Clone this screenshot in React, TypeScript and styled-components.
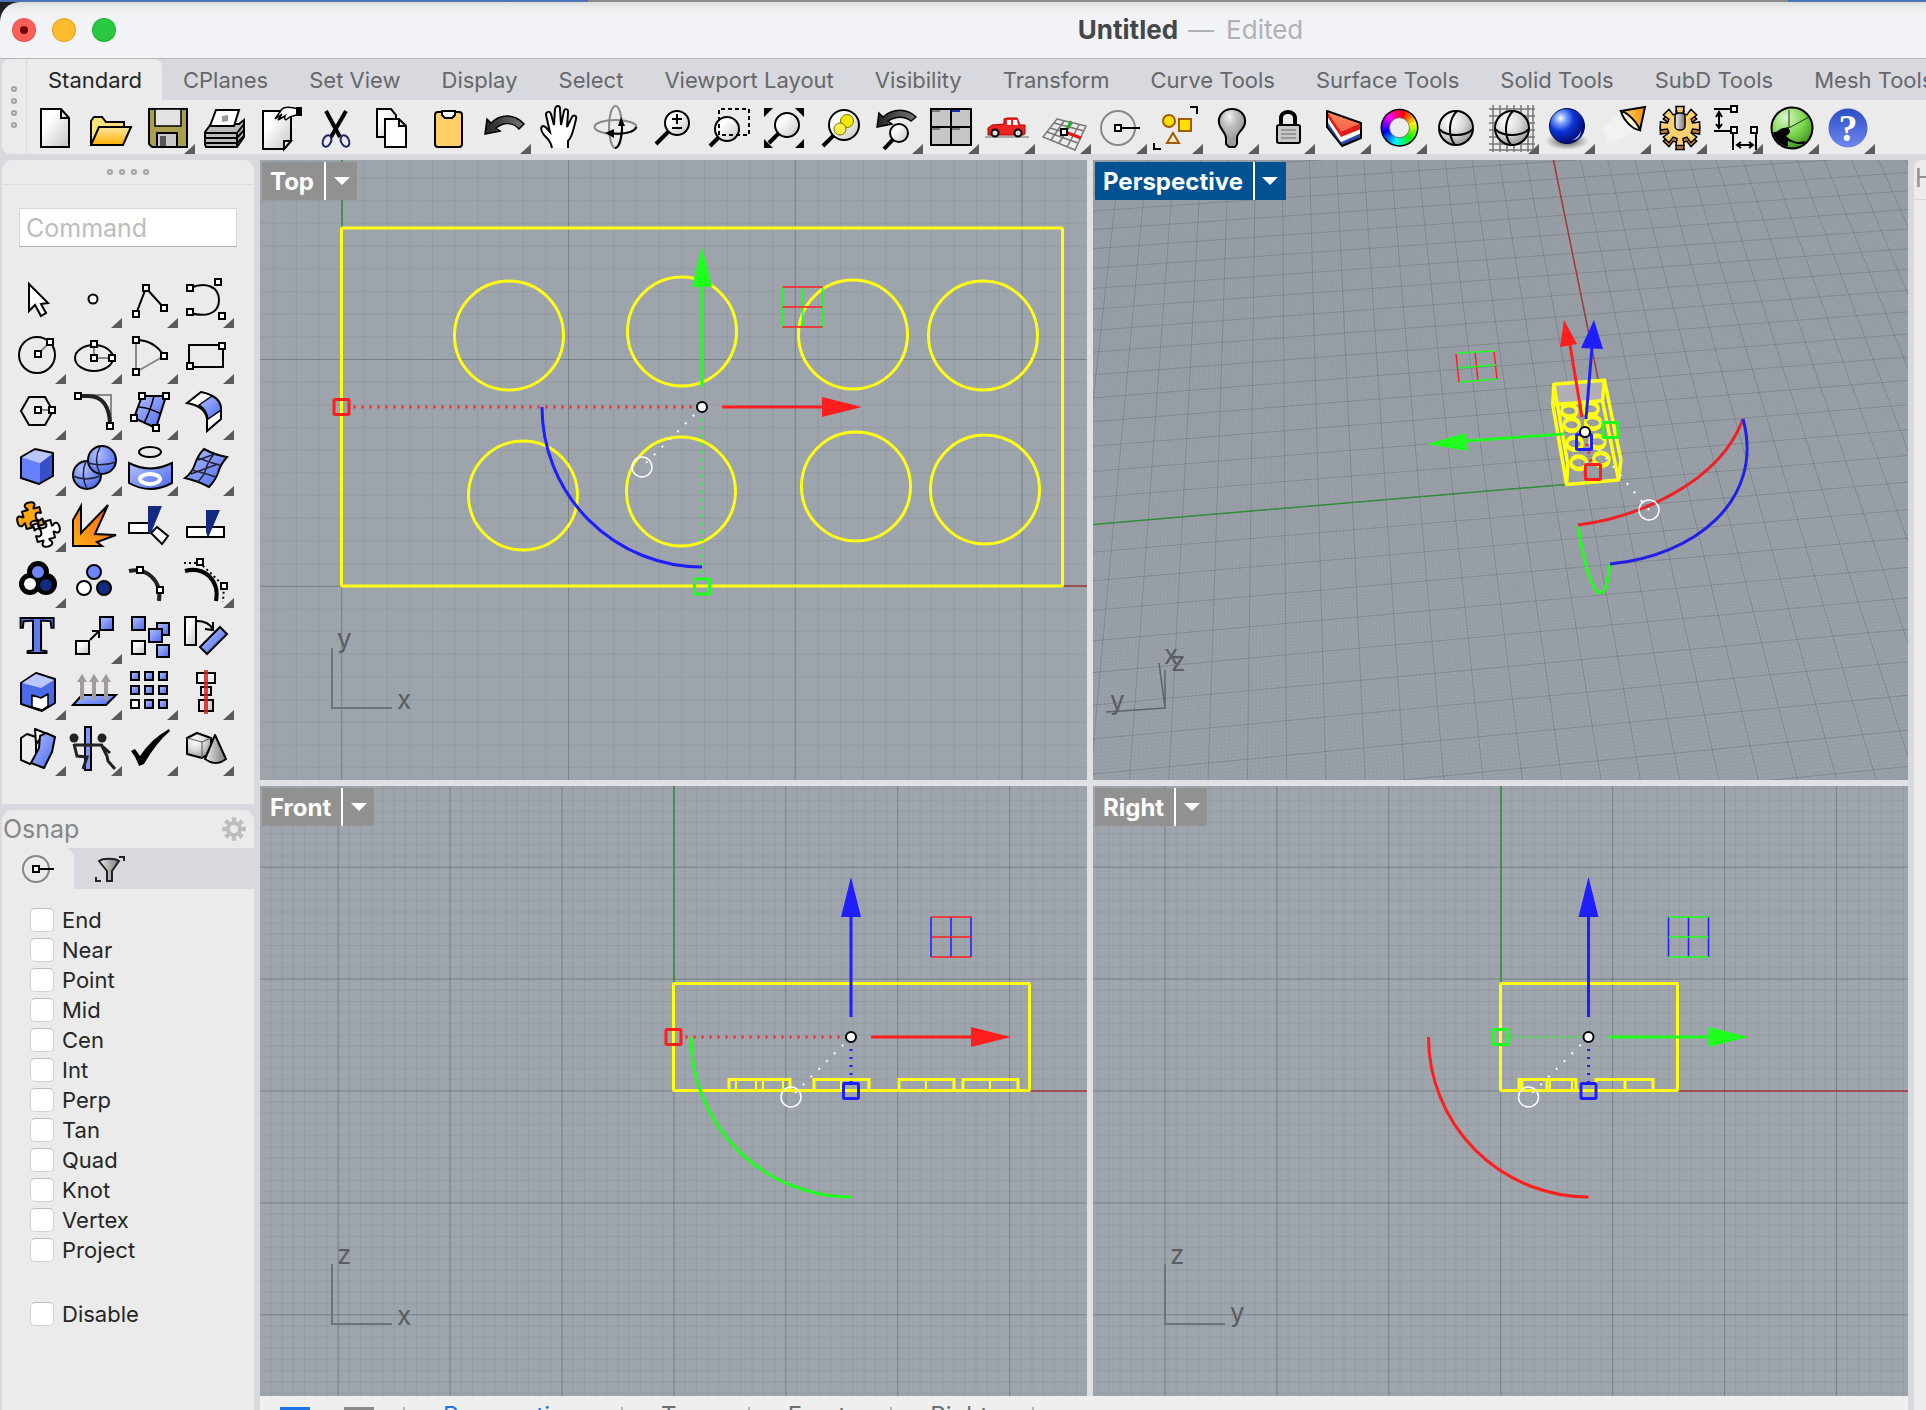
import React from "react";
import styled, { createGlobalStyle } from "styled-components";

const FONT = `Inter, "Liberation Sans", sans-serif`;
const YELLOW = "#ffff14";
const RED = "#ff1e1e";
const GREEN = "#1eff1e";
const BLUE = "#1e1eff";
const CHROME = "#d8d9de";
const PANEL = "#ebebeb";

const GlobalStyle = createGlobalStyle`
  * { box-sizing: border-box; }
  body { margin: 0; overflow: hidden; background: ${CHROME}; font-family: ${FONT}; }
  button, input { font: inherit; color: inherit; margin: 0; }
  button { border: 0; padding: 0; background: none; }
`;

/* ---------- window frame ---------- */

const Screen = styled.div`
  height: 100vh;
  overflow: hidden;
`;

const Shell = styled.div`
  display: flex;
  flex-direction: column;
  height: calc(100vh + 30px);
  background: ${CHROME};
`;

const Desktop = styled.div`
  display: grid;
  grid-template-columns: 588fr 1200fr 138fr;
  flex: none;
  height: 2px;
`;

const DesktopStrip = styled.span<{ $tone: string }>`
  background: ${(p) => p.$tone};
`;

const TitleBack = styled.div`
  flex: none;
  background: #1d1f24;
`;

const TitleBar = styled.header`
  display: flex;
  align-items: center;
  height: 57px;
  padding: 0 12px;
  border-top-left-radius: 20px;
  border-bottom: 1px solid #b4b5b9;
  background: linear-gradient(#dededf, #eff0f2 8px, #f2f3f6 16px);
`;

const Lights = styled.div`
  display: flex;
  gap: 16px;
  flex: 1068 1 0;
`;

const Light = styled.button<{ $color: string }>`
  display: grid;
  place-items: center;
  width: 24px;
  height: 24px;
  border-radius: 50%;
  border: 1px solid rgba(0, 0, 0, 0.12);
  background: ${(p) => p.$color};
`;

const LightDot = styled.span`
  width: 8px;
  height: 8px;
  border-radius: 50%;
  background: #720303;
`;

const TitleText = styled.h1`
  display: flex;
  gap: 10px;
  margin: 0;
  font-size: 26px;
  line-height: 32px;
  font-weight: 700;
  color: #45464a;
`;

const TitleState = styled.span`
  display: flex;
  gap: 12px;
  font-weight: 400;
  color: #b0b1b4;
`;

const TitleRest = styled.div`
  flex: 612 1 0;
`;

/* ---------- ribbon ---------- */

const Ribbon = styled.div`
  display: flex;
  flex: none;
  height: 95px;
  padding-left: 2px;
  margin-bottom: 6px;
`;

const RibbonGrip = styled.div`
  display: flex;
  align-items: center;
  justify-content: center;
  width: 25px;
  border-radius: 8px 0 0 8px;
  border-right: 1px solid ${CHROME};
  background: ${PANEL};
`;

const RibbonMain = styled.div`
  flex: 1;
  min-width: 0;
  background: ${PANEL};
`;

const TabStrip = styled.div`
  display: flex;
  height: 41px;
  overflow: hidden;
  background: linear-gradient(to right, ${PANEL} 100px, ${CHROME} 100px);
`;

const Tab = styled.button<{ $active?: boolean }>`
  flex: none;
  padding: 0 20px 0 21px;
  font-size: 22px;
  line-height: 42px;
  white-space: nowrap;
  color: ${(p) => (p.$active ? "#262626" : "#66676b")};
  background: ${(p) => (p.$active ? PANEL : CHROME)};
  border-top-right-radius: ${(p) => (p.$active ? "8px" : "0")};
`;

const ToolRow = styled.div`
  display: flex;
  height: 54px;
`;

const ToolButton = styled.button`
  display: block;
  position: relative;
  flex: none;
  width: 56px;
  height: 100%;
  svg { display: block; }
`;

const Corner = styled.span`
  position: absolute;
  right: 0;
  bottom: 0;
  width: 11px;
  height: 10px;
  background: #5c5c5c;
  clip-path: polygon(100% 0, 100% 100%, 0 100%);
`;

/* ---------- sidebar ---------- */

const Body = styled.div`
  display: flex;
  flex: 1;
  min-height: 0;
`;

const Sidebar = styled.aside`
  display: flex;
  flex-direction: column;
  gap: 6px;
  flex: none;
  width: 260px;
  padding: 0 6px 0 2px;
`;

const Panel = styled.section<{ $grow?: boolean }>`
  flex: ${(p) => (p.$grow ? "1" : "none")};
  border-radius: 10px 10px 0 0;
  background: ${PANEL};
`;

const PanelGrip = styled.div`
  display: grid;
  place-items: center;
  height: 25px;
  border-bottom: 1px solid #dcdcdc;
`;

const CommandField = styled.input`
  display: block;
  width: 218px;
  height: 39px;
  margin: 23px 17px 25px;
  padding: 0 6px;
  border: 1px solid #d6d6d6;
  border-bottom-color: #b0b0b0;
  background: #fff;
  font-size: 25px;
  outline: none;
  &::placeholder { color: #bcbcbc; opacity: 1; }
`;

const Palette = styled.div`
  display: grid;
  grid-template-columns: repeat(4, 56px);
  grid-auto-rows: 56px;
  padding: 0 8px 28px;
`;

const OsnapHeader = styled.div`
  display: flex;
  align-items: center;
  justify-content: space-between;
  height: 38px;
  padding: 0 8px 0 1px;
  color: #868686;
`;

const OsnapTitle = styled.h2`
  margin: 0;
  font-size: 25px;
  line-height: 34px;
  font-weight: 400;
`;

const OsnapTabs = styled.div`
  display: flex;
  height: 41px;
  background: linear-gradient(to right, ${PANEL} 60px, ${CHROME} 60px);
`;

const OsnapTab = styled.button<{ $active?: boolean }>`
  width: 72px;
  height: 41px;
  background: ${(p) => (p.$active ? PANEL : CHROME)};
  border-radius: ${(p) => (p.$active ? "0 10px 0 0" : "0 0 0 10px")};
  svg { display: block; margin: 0 auto; }
`;

const SnapList = styled.div`
  display: flex;
  flex-direction: column;
  padding: 16px 28px;
`;

const SnapItem = styled.label<{ $apart?: boolean }>`
  display: flex;
  align-items: center;
  gap: 8px;
  height: 30px;
  margin-top: ${(p) => (p.$apart ? "34px" : "0")};
  font-size: 22px;
  color: #262626;
`;

const Check = styled.input`
  appearance: none;
  width: 24px;
  height: 24px;
  border: 1px solid #d2d2d2;
  border-top-color: #bcbcbc;
  border-radius: 5px;
  background: #fff;
`;

/* ---------- viewports ---------- */

const Center = styled.main`
  display: flex;
  flex-direction: column;
  flex: 1;
  min-width: 0;
`;

const Viewports = styled.div`
  display: grid;
  grid-template: 620fr 610fr / 827fr 815fr;
  gap: 6px;
  flex: 1;
  min-height: 0;
  background: #e0e1e5;
`;

const ViewportBox = styled.section<{ $tone: string }>`
  position: relative;
  min-width: 0;
  min-height: 0;
  overflow: hidden;
  background: ${(p) => p.$tone};
`;

const Canvas = styled.svg`
  display: block;
  position: absolute;
  inset: 0;
  width: 100%;
  height: 100%;
`;

const ViewLabel = styled.div<{ $active?: boolean }>`
  position: absolute;
  left: 2px;
  top: 2px;
  display: flex;
  height: 38px;
  color: #fff;
  background: ${(p) => (p.$active ? "#005293" : "#919191")};
`;

const ViewName = styled.button`
  padding: 0 10px 0 8px;
  font-size: 24px;
  font-weight: 700;
`;

const ViewMenu = styled.button`
  display: grid;
  place-items: center;
  width: 33px;
  border-left: 2px solid #fff;
`;

const ViewTabs = styled.nav`
  display: flex;
  align-items: flex-start;
  flex: none;
  height: 44px;
  padding: 11px 20px 0;
  background: #efefef;
  font-size: 24px;
  line-height: 18px;
`;

const ViewTabIcon = styled.button<{ $tone: string }>`
  width: 30px;
  height: 24px;
  margin-right: 34px;
  border: 3px solid ${(p) => p.$tone};
  & + & { margin-right: 29px; }
`;

const ViewTab = styled.button<{ $active?: boolean }>`
  padding: 0 44px 0 38px;
  border-left: 2px solid #b5b5b5;
  color: ${(p) => (p.$active ? "#1f74e8" : "#6d6d6d")};
`;

const RightDock = styled.aside`
  flex: none;
  width: 12px;
  margin-left: 6px;
  overflow: hidden;
  border-top-left-radius: 8px;
  background: #ececec;
`;

const DockTitle = styled.div`
  height: 40px;
  padding-left: 1px;
  border-bottom: 1px solid #d9d9d9;
  font-size: 25px;
  line-height: 36px;
  color: #8f8f8f;
`;

/* ---------- shared icon parts ---------- */

const Grips = ({ vertical }: { vertical?: boolean }) => (
  <svg width={vertical ? 8 : 44} height={vertical ? 44 : 8} fill="none" stroke="#a2a2a2" strokeWidth="2">
    {[4, 16, 28, 40].map((n) => (
      <circle key={n} cx={vertical ? 4 : n} cy={vertical ? n : 4} r="2" />
    ))}
  </svg>
);

const Defs = () => (
  <svg width="0" height="0" style={{ position: "absolute" }} aria-hidden="true">
    <defs>
      <linearGradient id="paper" x2="1" y2="1"><stop offset=".3" stopColor="#fff" /><stop offset="1" stopColor="#c4c4c4" /></linearGradient>
      <linearGradient id="folder" x2="0" y2="1"><stop stopColor="#ffe9a0" /><stop offset="1" stopColor="#ffb000" /></linearGradient>
      <linearGradient id="sky" x2="1" y2="1"><stop stopColor="#b4c3ff" /><stop offset="1" stopColor="#4a66ee" /></linearGradient>
      <linearGradient id="fire" x1="0" y1="1" x2="1" y2="0"><stop stopColor="#ffb01c" /><stop offset=".6" stopColor="#ff7a1a" /><stop offset="1" stopColor="#e83c0c" /></linearGradient>
      <radialGradient id="pearl" cx=".35" cy=".3" r=".8"><stop stopColor="#fff" /><stop offset=".5" stopColor="#d8d8d8" /><stop offset="1" stopColor="#8c8c8c" /></radialGradient>
      <radialGradient id="bulb" cx=".4" cy=".2" r=".6"><stop stopColor="#f2f2f2" /><stop offset=".5" stopColor="#bcbcbc" /><stop offset="1" stopColor="#9c9c9c" /></radialGradient>
      <radialGradient id="azure" cx=".35" cy=".3" r=".8"><stop stopColor="#b3c2ff" /><stop offset="1" stopColor="#4463e6" /></radialGradient>
      <radialGradient id="marble" cx=".32" cy=".28" r=".75"><stop stopColor="#fff" /><stop offset=".2" stopColor="#7fa6ff" /><stop offset=".5" stopColor="#0c35d6" /><stop offset="1" stopColor="#000a6e" /></radialGradient>
      <radialGradient id="leaf" cx=".35" cy=".25" r=".9"><stop stopColor="#dcf5cf" /><stop offset=".5" stopColor="#7cd64a" /><stop offset="1" stopColor="#2c7a14" /></radialGradient>
      <linearGradient id="help" x2="0" y2="1"><stop stopColor="#2a4fc6" /><stop offset="1" stopColor="#6f86ee" /></linearGradient>
      <linearGradient id="steel" x2="1" y2="0"><stop stopColor="#eee" /><stop offset="1" stopColor="#777" /></linearGradient>
      <radialGradient id="shade"><stop stopColor="#222" stopOpacity=".9" /><stop offset="1" stopColor="#555" stopOpacity="0" /></radialGradient>
      <linearGradient id="cone" x2="1" y2="0"><stop stopColor="#ffd080" /><stop offset="1" stopColor="#ff9400" /></linearGradient>
      <linearGradient id="swoop" x2="1" y2="0"><stop stopColor="#222" /><stop offset="1" stopColor="#777" /></linearGradient>
      <linearGradient id="coral" x2="0" y2="1"><stop stopColor="#ff8a5c" /><stop offset="1" stopColor="#ff6048" /></linearGradient>
    </defs>
  </svg>
);

const Node = ({ x, y }: { x: number; y: number }) => (
  <rect x={x - 3} y={y - 3} width="6" height="6" fill="#fff" stroke="#000" strokeWidth="2" />
);

const Lens = ({ x, y, r, hx, hy }: { x: number; y: number; r: number; hx: number; hy: number }) => {
  const d = Math.hypot(hx - x, hy - y);
  return (
    <>
      <path d={`M${x + ((hx - x) * r) / d} ${y + ((hy - y) * r) / d}L${hx} ${hy}`} stroke="#000" strokeWidth="4" />
      <circle cx={x} cy={y} r={r} fill="url(#paper)" stroke="#000" strokeWidth="2" />
    </>
  );
};

/* Jigsaw piece: knobs on two sides, bites on the other two. */
const PIECE =
  "M-9 -9H-3C-3 -11 -5 -11 -5 -13C-5 -17 5 -17 5 -13C5 -11 3 -11 3 -9H9V-3C7 -3 8 -4 6 -4C2 -4 2 4 6 4C8 4 7 3 9 3V9H3C3 7 4 8 4 6C4 2 -4 2 -4 6C-4 8 -3 7 -3 9H-9V3C-11 3 -11 5 -13 5C-17 5 -17 -5 -13 -5C-11 -5 -11 -3 -9 -3Z";
const Jigsaw = ({ x, y, turn, fill }: { x: number; y: number; turn: number; fill: string }) => (
  <path d={PIECE} transform={`translate(${x} ${y}) rotate(${turn})`} fill={fill} stroke="#000" strokeWidth="2" strokeLinejoin="round" />
);

function gearPath(cx: number, cy: number, inner: number, outer: number, teeth: number) {
  const step = (Math.PI * 2) / teeth;
  const pts: string[] = [];
  for (let i = 0; i < teeth; i++) {
    const spots: [number, number][] = [[-0.3, inner], [-0.26, outer], [0.26, outer], [0.3, inner]];
    spots.forEach(([k, r]) => {
      const a = (i + k) * step;
      pts.push(`${(cx + Math.sin(a) * r).toFixed(1)} ${(cy - Math.cos(a) * r).toFixed(1)}`);
    });
  }
  return `M${pts.join("L")}Z`;
}

const ColorRing = () => (
  <>
    <circle cx="28.5" cy="27.7" r="19" fill="#000" />
    {Array.from({ length: 36 }, (_, i) => {
      const a = (i * Math.PI) / 18;
      const b = ((i + 1.1) * Math.PI) / 18;
      return (
        <path
          key={i}
          d={`M28.5 27.7L${28.5 + 17.5 * Math.cos(a)} ${27.7 + 17.5 * Math.sin(a)}L${28.5 + 17.5 * Math.cos(b)} ${27.7 + 17.5 * Math.sin(b)}Z`}
          fill={`hsl(${80 + i * 10} 100% 50%)`}
        />
      );
    })}
    <circle cx="28.5" cy="27.7" r="10" fill={PANEL} stroke="#777" strokeWidth="1" />
  </>
);

const Globe = () => (
  <>
    <circle cx="29" cy="28" r="17" fill="url(#pearl)" stroke="#000" strokeWidth="2" />
    <path d="M30 11C21 20 21 36 28 45M12 29C20 37 38 37 46 29" fill="none" stroke="#000" strokeWidth="2" />
  </>
);

type Item = { name: string; more?: boolean; art: React.ReactNode };
const k2 = { stroke: "#000", strokeWidth: 2, fill: "none" } as const;

const toolbar: Item[] = [
  { name: "New", art: <path {...k2} fill="url(#paper)" d="M14 9H34L42 18V47H14ZM34 9V18H42" /> },
  { name: "Open", art: <g {...k2}><path fill="#ffe27a" d="M8 45V21L11 17H19L23 22H41V30" /><path fill="url(#folder)" d="M8 45L16 27H48L40 45Z" /></g> },
  { name: "Save", more: true, art: <g {...k2}><path fill="#aaa04c" d="M10 9H48V47H13L10 44Z" /><path fill="#e2e2e2" strokeWidth="1.5" d="M16 9H42V26H16Z" /><path fill="#c8c8c8" d="M18 33H38V47H18Z" /><path fill="#555" stroke="none" d="M21 36H27V46H21Z" /></g> },
  { name: "Print", art: <g {...k2}><path fill="#bbb" d="M10 32L16 24H44L49 20V37L42 47H11L10 44Z" /><path fill="#fff" d="M21 10H44L39 26H15Z" /><path d="M10 33H42L49 24M10 38H42L49 30M10 43H42L49 36M42 33V47" /><path d="M27 16L33 15V21L27 22Z" stroke="none" fill="#999" /></g> },
  { name: "Page properties", art: <g {...k2}><path fill="url(#paper)" d="M12 11H40V41L33 49H12Z" /><path fill="#fff" d="M33 49V41H40Z" /><path fill="#fff" strokeWidth="1.5" d="M24 19L31 9C34 6 40 7 48 9V14C44 16 40 15 36 19C34 21 33 18 34 16L27 20L31 14Z" /><path fill="#000" d="M46 8H50V15H46Z" /></g> },
  { name: "Cut", art: <g fill="none"><path d="M19 11L33 37M39 11L24 37" stroke="#000" strokeWidth="4" /><ellipse cx="20" cy="41" rx="4" ry="6" transform="rotate(25 20 41)" stroke="#1d2560" strokeWidth="2" /><ellipse cx="38" cy="41" rx="4" ry="6" transform="rotate(-25 38 41)" stroke="#1d2560" strokeWidth="2" /></g> },
  { name: "Copy", art: <g {...k2} fill="url(#paper)"><path d="M14 9H28L33 15V37H14Z" /><path fill="#fff" d="M22 19H36L43 26V47H22ZM36 19V26H43" /></g> },
  { name: "Paste", art: <g {...k2}><rect x="16" y="12" width="27" height="35" rx="3" fill="#ffd066" /><path fill="#fff" d="M23 11H36V15L33 18H26L23 15Z" /></g> },
  { name: "Undo", more: true, art: <path d="M10 34L12 19L16 23C26 13 40 14 49 24L44 29C38 22 29 22 21 28L25 31Z" fill="url(#swoop)" stroke="#000" strokeWidth="1.5" /> },
  { name: "Pan", art: <path {...k2} fill="#fff" d="M21 48C20 42 17 39 13 35C10 31 9 27 12 26C15 26 16 29 19 32L15 15C15 11 19 11 20 14L23 25L24 9C25 5 29 5 29 9L30 25L33 11C34 8 38 9 37 13L36 27L41 17C43 14 46 16 45 19C43 28 41 38 37 41V48" /> },
  { name: "Rotate view", art: <g fill="none" strokeWidth="2"><ellipse cx="28.500" cy="27" rx="6.500" ry="21" stroke="#888" /><ellipse cx="28.500" cy="27" rx="21" ry="7" stroke="#888" /><path d="M35 24V30C34 42 31 48 28 48M49 27C48 32 36 35 24 33" stroke="#000" /><path d="M31 26L34 17L38 26ZM27 29L18 33L27 38Z" fill="#000" /></g> },
  { name: "Zoom dynamic", art: <g><Lens x={34} y={23} r={12} hx={13} hy={44} /><path {...k2} d="M34 14V24M29 19H39M29 28H39" /></g> },
  { name: "Zoom window", art: <g><Lens x={28} y={29} r={12} hx={11} hy={46} /><path {...k2} strokeDasharray="4 3" d="M20 35V9H50V35Z" /></g> },
  { name: "Zoom extents", art: <g><Lens x={32} y={25} r={12} hx={14} hy={43} /><path d="M9 8H18L9 17ZM49 8V17L40 8ZM49 48H40L49 39ZM9 48V39L18 48Z" /></g> },
  { name: "Zoom selected", art: <g><Lens x={33} y={25} r={15} hx={12} hy={46} /><g fill="#f5e800" stroke="#7a7400"><circle cx="36" cy="21" r="6.500" /><circle cx="29" cy="29" r="6" fill="#fff14a" /></g></g> },
  { name: "Undo view change", more: true, art: <g><path d="M10 27L12 13L16 17C26 8 40 8 49 17L44 21C38 16 29 16 21 21L25 24Z" fill="url(#swoop)" stroke="#000" strokeWidth="1.5" /><Lens x={32} y={33} r={9} hx={17} hy={49} /></g> },
  { name: "Four viewports", more: true, art: <g><path {...k2} fill="#c6c6c6" d="M8 9H48V45H8ZM28 9V45M8 27H48" /><path d="M9 10H17V12H9ZM9 28H17V30H9ZM29 28H37V30H29Z" fill="#777" /><path d="M29 10H37V12H29Z" fill="#0a2fb8" /></g> },
  { name: "Named views", more: true, art: <g><path d="M6 37H50" stroke="#aaa" strokeWidth="2" /><path d="M9 35V28L13 25L25 24V19L28 18H38L41 25H46V34L44 35Z" fill="#ee2222" stroke="#a00" /><path d="M28 20H32V25H28ZM34 20H38L39 25H34Z" fill="#fff" /><g fill="#ddd" stroke="#000" strokeWidth="2"><circle cx="16" cy="33" r="3.500" /><circle cx="39" cy="33" r="3.500" /></g></g> },
  { name: "Construction planes", more: true, art: <g fill="none"><path stroke="#777" strokeWidth="1.500" d="M22 19L51 26L40 50L8 37ZM19 23L49 31M15 28L46 37M12 32L43 43M29 21L16 40M37 23L24 43M44 25L32 47" /><path d="M30 32L36 21" stroke="#16b816" strokeWidth="2.500" /><path d="M30 32L46 38" stroke="#e01818" strokeWidth="3" /><Node x={29} y={32} /></g> },
  { name: "Object snap", more: true, art: <g><circle cx="27" cy="28" r="17" fill="none" stroke="#888" strokeWidth="2" /><path {...k2} d="M27 28H49" /><Node x={27} y={28} /></g> },
  { name: "Selection filter", more: true, art: <g strokeWidth="2"><path {...k2} d="M43 7H50V14M7 43V49H14" /><g stroke="#a35a00"><circle cx="22" cy="21" r="6" fill="#ffe000" /><path d="M32 19H44V31H32Z" fill="#ffe000" /><path d="M26 33L32 43H20Z" fill="#ffe8c8" /></g></g> },
  { name: "Hide objects", more: true, art: <path {...k2} fill="url(#bulb)" d="M29 9C20 9 15 16 16 23C17 30 23 32 23 38V44L26 47H32L34 44V38C34 32 41 30 42 23C43 15 37 9 29 9Z" /> },
  { name: "Lock objects", more: true, art: <g><path d="M22 25V18C22 10 36 10 36 18V25" fill="none" stroke="#000" strokeWidth="4" /><rect x="18" y="25" width="23" height="18" rx="2" fill="#c8c8c8" stroke="#000" strokeWidth="2" /><path d="M22 30H37M22 34H37M22 38H37" stroke="#888" strokeWidth="1.500" /></g> },
  { name: "Layers", more: true, art: <g strokeLinejoin="round"><path fill="#2b4ab4" d="M12 21L26 42L46 33V38L27 46L12 27Z" /><path fill="#fff" d="M12 16L26 37L46 29V33L26 42L12 21Z" /><path fill="#e21c1c" d="M12 11L26 31L46 23V29L26 37L12 16Z" /><path fill="url(#coral)" d="M12 11L46 23L26 32Z" /><path {...k2} d="M12 11L46 23V38L27 46L12 27Z" /></g> },
  { name: "Object properties", more: true, art: <ColorRing /> },
  { name: "Shaded viewport", art: <Globe /> },
  { name: "Grid", more: true, art: <g><path stroke="#777" strokeWidth="1.500" d="M6 9H52M6 16H52M6 23H52M6 30H52M6 37H52M6 44H52M6 50H52M10 5V52M17 5V52M24 5V52M31 5V52M38 5V52M45 5V52M50 5V52" /><Globe /></g> },
  { name: "Render", more: true, art: <g><ellipse cx="28" cy="41" rx="22" ry="9" fill="url(#shade)" /><circle cx="28" cy="26" r="17.500" fill="url(#marble)" stroke="#000a50" /><path d="M33 40C38 38 41 34 42 30C42 37 38 40 33 40Z" fill="#9dbcff" /></g> },
  { name: "Lights", more: true, art: <g {...k2}><path d="M26 11L45 30L14 44L8 28Z" stroke="none" fill="#fff" opacity=".35" /><path fill="url(#cone)" d="M26 11L50 7L45 30Z" /><path fill="#fff3d8" d="M26 11C32 12 42 22 45 30C38 30 28 20 26 11Z" /></g> },
  { name: "Options", more: true, art: <g {...k2}><path fill="#c98420" strokeWidth="1.500" d={gearPath(29, 30, 13, 20, 8)} /><path fill="#ffd070" strokeWidth="1.500" d={gearPath(29, 26, 13, 20, 8)} /><rect x="24" y="13" width="10" height="17" rx="4" fill="url(#steel)" strokeWidth="1.500" /></g> },
  { name: "Dimension", more: true, art: <g {...k2}><path d="M7 9H24M7 31H24M12 14V27M9 17L12 12L15 17M9 24L12 28L15 24M26 33V50M49 33V50M31 45H45M34 42L30 45L34 48M42 42L46 45L42 48" /><Node x={27} y={9} /><Node x={27} y={30} /><Node x={47} y={30} /></g> },
  { name: "Grasshopper", more: true, art: <g><circle cx="29" cy="28" r="20.500" fill="url(#leaf)" stroke="#000" strokeWidth="2" /><path d="M10 32C15 33 16 28 21 28L25 27L27 31C27 33 25 35 23 36C27 40 32 42 36 42L42 41L41 44L34 44L25 41L25 47C17 45 11 39 10 32Z" /><path d="M24 29L46 17M26 28V10" stroke="#123a08" /></g> },
  { name: "Help", more: true, art: <g><circle cx="29" cy="28" r="19.500" fill="url(#help)" /><text x="29" y="41" textAnchor="middle" fontFamily="Liberation Serif, serif" fontWeight="700" fontSize="38" fill="#fff">?</text></g> },
];

const Box = ({ x, y, s = 13, fill = "url(#sky)" }: { x: number; y: number; s?: number; fill?: string }) => (
  <rect x={x} y={y} width={s} height={s} fill={fill} stroke="#000" strokeWidth="2" />
);

const palette: Item[] = [
  { name: "Select", art: <path {...k2} fill="#fff" d="M19 12V39L25 33L31 44L36 41L31 32L38 31Z" /> },
  { name: "Point", more: true, art: <circle cx="27" cy="27" r="4.500" fill="#fff" stroke="#000" strokeWidth="2" /> },
  { name: "Polyline", more: true, art: <g {...k2}><path d="M14 42L24 16L42 36" /><Node x={24} y={16} /><Node x={14} y={42} /><Node x={42} y={36} /></g> },
  { name: "Curve", more: true, art: <g {...k2}><path d="M12 16C28 9 41 15 41 28C41 43 26 45 12 41" /><Node x={12} y={16} /><Node x={40} y={10} /><Node x={12} y={40} /><Node x={44} y={44} /></g> },
  { name: "Circle", more: true, art: <g {...k2}><circle cx="27" cy="27" r="18" /><path d="M28 26L40 14" stroke="#888" /><Node x={28} y={26} /><Node x={40} y={14} /></g> },
  { name: "Ellipse", more: true, art: <g {...k2}><ellipse cx="28" cy="30" rx="19" ry="13" /><path d="M28 16V30H46" stroke="#888" /><Node x={28} y={16} /><Node x={28} y={30} /><Node x={46} y={30} /></g> },
  { name: "Arc", more: true, art: <g {...k2}><path d="M14 12V44L42 28" stroke="#888" /><path d="M14 12C27 12 36 18 42 28" /><Node x={14} y={12} /><Node x={42} y={28} /><Node x={14} y={44} /></g> },
  { name: "Rectangle", more: true, art: <g {...k2}><path d="M11 17H45V39H11Z" /><Node x={44} y={18} /><Node x={12} y={38} /></g> },
  { name: "Polygon", more: true, art: <g {...k2}><path d="M11 27L19 13H35L43 27L35 41H19Z" /><path d="M28 26H42" stroke="#888" /><Node x={28} y={26} /><Node x={42} y={26} /></g> },
  { name: "Fillet curves", more: true, art: <g {...k2}><path d="M14 11H45V42" stroke="#888" /><path d="M12 12H22C36 12 44 22 44 42" stroke="#222" strokeWidth="4" /><Node x={12} y={12} /><Node x={44} y={42} /></g> },
  { name: "Surface from points", more: true, art: <g {...k2}><path fill="url(#sky)" d="M20 12H44L34 44L12 34Z" /><path d="M32 12Q28 28 22 39M17 23Q28 24 39 30" strokeWidth="1.500" /><Node x={20} y={12} /><Node x={44} y={12} /><Node x={12} y={34} /><Node x={34} y={44} /></g> },
  { name: "Loft", more: true, art: <g {...k2}><path fill="#fff" d="M9 19L23 8C33 10 43 15 43 25V35L29 47V35C28 26 20 21 9 19Z" /><path fill="url(#sky)" strokeWidth="1.500" d="M21 21L34 12C40 15 43 20 43 26L30 35C29 29 26 24 21 21Z" /></g> },
  { name: "Box", more: true, art: <g strokeLinejoin="round"><path fill="#3650c8" d="M30 23L43 13V36L30 44Z" /><path fill="#b9c6ff" d="M11 17L25 9L43 13L30 23Z" /><path fill="#6680ff" d="M11 17L30 23V44L11 38Z" /><path {...k2} d="M11 17L25 9L43 13V36L29 44L11 38Z" /></g> },
  { name: "Sphere", more: true, art: <g {...k2}><circle cx="21" cy="35" r="14" fill="url(#azure)" /><path strokeWidth="1.500" stroke="#223" d="M20 21Q14 35 21 49M7 36Q20 42 34 36" /><circle cx="36" cy="20" r="14" fill="url(#azure)" /><path strokeWidth="1.500" stroke="#223" d="M34 7Q27 20 34 34M22 23Q36 27 50 22" /></g> },
  { name: "Project curve", more: true, art: <g {...k2}><ellipse cx="28" cy="12" rx="11" ry="5" /><path fill="url(#sky)" d="M7 23Q28 34 50 23V43Q28 55 7 43Z" /><ellipse cx="28" cy="39" rx="10" ry="5" stroke="#fff" strokeWidth="4" /></g> },
  { name: "Surface tools", more: true, art: <g {...k2}><path fill="url(#sky)" d="M26 9Q37 15 49 17Q42 25 40 33Q37 41 31 47Q20 41 7 38Q14 33 17 24Q20 15 26 9Z" /><path strokeWidth="1.500" stroke="#223" d="M37 13Q30 21 28 29Q25 38 19 42M20 18Q31 22 44 26M14 30Q26 33 38 37M20 20L37 14M13 34L40 24" /></g> },
  { name: "Join", more: true, art: <g><Jigsaw x={34} y={35} turn={165} fill="#fff" /><Jigsaw x={23} y={22} turn={-15} fill="#ffa514" /></g> },
  { name: "Explode", art: <path {...k2} fill="url(#fire)" d="M7 50V24L15 10V37L42 9L29 38L50 39L31 46L36 50Z" /> },
  { name: "Trim", art: <g {...k2}><path fill="#fff" d="M7 27H27V37H7ZM35 31L46 40L40 48L29 37Z" /><path fill="#142a80" stroke="none" d="M26 10H40L29 37H26Z" /></g> },
  { name: "Split", art: <g {...k2}><path fill="#fff" d="M9 31H46V41H9Z" /><path fill="#142a80" stroke="none" d="M28 14H42L30 42L28 36Z" /></g> },
  { name: "Group", more: true, art: <g stroke="#000" strokeWidth="4"><circle cx="20" cy="32" r="9" /><circle cx="36" cy="32" r="9" /><circle cx="28" cy="20" r="9" /><g strokeWidth="2"><circle cx="36" cy="33" r="7" fill="#142a80" /><circle cx="20" cy="32" r="7" fill="#fff" /><circle cx="28" cy="20" r="7" fill="#6b86ff" /></g></g> },
  { name: "Ungroup", art: <g {...k2}><circle cx="28" cy="20" r="7" fill="#6b86ff" /><circle cx="18" cy="36" r="7" fill="#fff" /><circle cx="38" cy="36" r="7" fill="#142a80" /></g> },
  { name: "Edit points", art: <g {...k2}><path d="M7 19C24 15 40 28 37 49" stroke="#222" strokeWidth="4" /><Node x={18} y={18} /><Node x={38} y={38} /></g> },
  { name: "Control points", more: true, art: <g {...k2}><path d="M7 19C26 14 42 28 38 49" strokeWidth="4" /><path strokeDasharray="2 3" d="M6 11H22L46 34L45 50" /><Node x={22} y={10} /><Node x={46} y={34} /></g> },
  { name: "Text", art: <text x="27" y="45" textAnchor="middle" fontFamily="Liberation Serif, serif" fontWeight="700" fontSize="52" fill="#5f7cf2" stroke="#000" strokeWidth="2">T</text> },
  { name: "Move", more: true, art: <g {...k2}><Box x={34} y={9} /><Box x={10} y={33} fill="url(#paper)" /><path d="M24 32L33 23M26 23H33V30" /></g> },
  { name: "Copy objects", art: <g><Box x={10} y={9} /><Box x={35} y={15} s={12} /><Box x={27} y={21} /><Box x={10} y={33} fill="url(#paper)" /><Box x={35} y={37} s={12} /></g> },
  { name: "Rotate", art: <g {...k2}><path fill="url(#paper)" d="M7 9H18V37H7Z" /><path fill="url(#sky)" d="M42 19L49 26L29 46L22 39Z" /><path d="M19 13Q30 13 35 21M35 14V22L27 21" /></g> },
  { name: "Solid tools", more: true, art: <g {...k2} strokeLinejoin="round"><path fill="#4b6ae8" d="M11 19L26 9L45 15V39L32 47L11 40Z" /><path fill="#b9c6ff" stroke="none" d="M12 19L26 10L44 16L31 24Z" /><path fill="#fff" strokeWidth="1.500" d="M22 31L31 34L38 30V42L32 46L22 43Z" /></g> },
  { name: "Extrude", more: true, art: <g><path {...k2} fill="url(#sky)" d="M7 41L16 31H50L40 41Z" /><path fill="#a09a9a" d="M16 10L21 18H18V36H14V18H11ZM28 10L33 18H30V36H26V18H23ZM40 10L45 18H42V36H38V18H35Z" /></g> },
  { name: "Array", more: true, art: <g>{[8, 22, 36].map((y) => [9, 23, 37].map((x) => <Box key={`${x}-${y}`} x={x} y={y} s={8} fill={x === 9 && y === 36 ? "#fff" : "url(#sky)"} />))}</g> },
  { name: "Align", more: true, art: <g {...k2}><path fill="url(#paper)" d="M19 9H37V19H19ZM23 23H33V31H23ZM21 36H35V47H21Z" /><path d="M28 6V50" stroke="#d82020" strokeWidth="4" opacity=".85" /></g> },
  { name: "Cap and shell", more: true, art: <g {...k2} strokeLinejoin="round"><path fill="#eee" d="M11 18L17 14L26 17V40L20 44L11 40Z" /><path fill="#fff" d="M25 9L35 13L26 24Z" /><path fill="url(#sky)" d="M30 16L36 13L45 17L42 32L34 48L21 43L29 28Z" /></g> },
  { name: "Cage edit", more: true, art: <g {...k2}><rect x="19" y="7" width="6" height="43" fill="#7d95ff" /><g fill="#222" stroke="none"><circle cx="8" cy="18" r="4.500" /><circle cx="36" cy="18" r="4.500" /></g><path d="M8 25H35M8 24L11 36L21 37L17 49M35 24L41 36L42 41L49 49M35 25L44 33" stroke="#222" strokeWidth="3" /></g> },
  { name: "Check", more: true, art: <path d="M9 31L13 29L18 36Q28 20 47 9L48 11Q34 23 22 44L17 46Q14 37 9 31Z" /> },
  { name: "Mesh", more: true, art: <g {...k2} strokeLinejoin="round"><path fill="url(#pearl)" d="M9 18L19 13L33 18V32L24 38L9 34Z" /><path d="M9 18L24 22L33 18M24 22V38" strokeWidth="1" stroke="#555" /><path fill="url(#steel)" d="M37 15L48 39Q38 47 27 39Z" /></g> },
];

const Tool = ({ item, h }: { item: Item; h: number }) => (
  <ToolButton aria-label={item.name}>
    <svg width="56" height={h} viewBox={`0 0 56 ${h}`}>{item.art}</svg>
    {item.more && <Corner />}
  </ToolButton>
);

/* ---------- viewport drawings (shared drawing space for all four views) ---------- */

type View = { x: number; y: number; w: number; h: number };

function gridPath(v: View, ox: number, oy: number, step: number) {
  let d = "";
  for (let x = ox - Math.floor((ox - v.x) / step) * step; x < v.x + v.w; x += step) d += `M${x.toFixed(1)} ${v.y}V${v.y + v.h}`;
  for (let y = oy - Math.floor((oy - v.y) / step) * step; y < v.y + v.h; y += step) d += `M${v.x} ${y.toFixed(1)}H${v.x + v.w}`;
  return d;
}

const Grid = ({ view, ox, oy, major }: { view: View; ox: number; oy: number; major: number }) => (
  <g stroke="#4a525c" strokeWidth="1" fill="none">
    <path d={gridPath(view, ox, oy, major / 10)} opacity=".1" />
    <path d={gridPath(view, ox, oy, major)} opacity=".36" />
  </g>
);

const Handle = ({ x, y, color }: { x: number; y: number; color: string }) => (
  <rect x={x - 7.5} y={y - 7.5} width="15" height="15" rx="1" fill="none" stroke={color} strokeWidth="3" />
);

const Pivot = ({ x, y }: { x: number; y: number }) => (
  <circle cx={x} cy={y} r="5" fill="#fff" stroke="#000" strokeWidth="2" />
);

const PlaneGrip = ({ x, y, rows, cols }: { x: number; y: number; rows: string; cols: string }) => (
  <g strokeWidth="1.5" fill="none">
    <path d={`M${x} ${y}v40m20 -40v40m20 -40v40`} stroke={cols} />
    <path d={`M${x} ${y}h40m-40 20h40m-40 20h40`} stroke={rows} />
  </g>
);

const Gumball = ({ x, y, left, bottom, h, v, arc }: { x: number; y: number; left: number; bottom: number; h: string; v: string; arc: string }) => (
  <g fill="none" strokeWidth="3">
    <path d={`M${left + 12} ${y}H${x - 6}`} stroke={h} strokeDasharray="2 6" />
    <path d={`M${x} ${y + 12}V${bottom - 8}`} stroke={v} strokeDasharray="2 6" />
    <path d={`M${x} ${y}L${x - 60} ${y + 60}`} stroke="#fff" strokeWidth="2" strokeDasharray="2 9" />
    <circle cx={x - 60} cy={y + 60} r="10" stroke="#fff" strokeWidth="1.5" />
    <path d={`M${x - 160} ${y}A160 160 0 0 0 ${x} ${y + 160}`} stroke={arc} />
    <path d={`M${x + 20} ${y}H${x + 122}`} stroke={h} />
    <path d={`M${x + 120} ${y - 10}L${x + 160} ${y}L${x + 120} ${y + 10}Z`} fill={h} stroke="none" />
    <path d={`M${x} ${y - 20}V${y - 122}`} stroke={v} />
    <path d={`M${x - 10} ${y - 120}L${x} ${y - 160}L${x + 10} ${y - 120}Z`} fill={v} stroke="none" />
    <Handle x={left} y={y} color={h} />
    <Handle x={x} y={bottom} color={v} />
    <Pivot x={x} y={y} />
  </g>
);

const AxisMark = ({ x, y, h, v, descend }: { x: number; y: number; h: string; v: string; descend?: number }) => (
  <g fontFamily={FONT} fontSize="26" fill="#595d62">
    <path d={`M${x} ${y - 60}V${y}H${x + 60}`} fill="none" stroke="#6d737a" strokeWidth="2" />
    <text x={x + 5} y={y - 60}>{v}</text>
    <text x={x + 65} y={y + (descend ?? 1)}>{h}</text>
  </g>
);

const studs = [
  [509, 335], [682, 331], [853, 334], [983, 335],
  [523, 495], [681, 491], [856, 486], [985, 489],
];

const topView: View = { x: 260, y: 160, w: 827, h: 620 };
const perspView: View = { x: 1093, y: 160, w: 815, h: 620 };
const frontView: View = { x: 260, y: 786, w: 827, h: 610 };
const rightView: View = { x: 1093, y: 786, w: 815, h: 610 };

const TopScene = () => (
  <>
    <Grid view={topView} ox={341.7} oy={586.3} major={226.8} />
    <path d="M342 160V228" stroke="#2f8f3a" strokeWidth="1.5" />
    <path d="M1063 586H1087" stroke="#a03a40" strokeWidth="1.5" />
    <g fill="none" stroke={YELLOW} strokeWidth="3">
      <rect x="341.5" y="228" width="721" height="358" rx="1" />
      {studs.map(([x, y]) => <circle key={`${x}-${y}`} cx={x} cy={y + 0.5} r="54.5" />)}
    </g>
    <PlaneGrip x={782.5} y={287} rows={RED} cols={GREEN} />
    <Gumball x={702} y={407} left={341.5} bottom={586.5} h={RED} v={GREEN} arc={BLUE} />
    <AxisMark x={332} y={708} h="x" v="y" />
  </>
);

const FrontScene = () => (
  <>
    <Grid view={frontView} ox={673.9} oy={1091} major={111.9} />
    <path d="M674 786V984" stroke="#2f8f3a" strokeWidth="1.5" />
    <path d="M1030 1091H1087" stroke="#a03a40" strokeWidth="1.5" />
    <g fill="none" stroke={YELLOW} strokeWidth="3">
      <rect x="673.5" y="983.5" width="356" height="107" rx="1" />
      <path d="M729 1091V1079.5H790V1091M814 1091V1079.5H869V1091M899 1091V1079.5H954V1091M963 1091V1079.5H1018V1091" />
      <path d="M736 1079V1091M756 1079V1091M763 1079V1091M783 1079V1091M841 1079V1091M926 1079V1091M990 1079V1091" strokeWidth="2" />
    </g>
    <PlaneGrip x={931} y={917} rows={RED} cols={BLUE} />
    <Gumball x={851} y={1037} left={673.5} bottom={1091} h={RED} v={BLUE} arc={GREEN} />
    <AxisMark x={332} y={1324} h="x" v="z" />
  </>
);

const RightScene = () => (
  <>
    <Grid view={rightView} ox={1500.7} oy={1091} major={111.9} />
    <path d="M1501 786V984" stroke="#2f8f3a" strokeWidth="1.5" />
    <path d="M1677 1091H1908" stroke="#a03a40" strokeWidth="1.5" />
    <g fill="none" stroke={YELLOW} strokeWidth="3">
      <rect x="1500.5" y="983.5" width="177" height="107" rx="1" />
      <path d="M1519 1091V1079.5H1576V1091M1596 1091V1079.5H1653V1091M1522 1079V1091M1547 1079V1091M1625 1079V1091" />
      <path d="M1550 1079V1091M1572 1079V1091" strokeWidth="2" />
    </g>
    <PlaneGrip x={1668.5} y={917} rows={GREEN} cols={BLUE} />
    <Gumball x={1588.5} y={1037} left={1500.5} bottom={1091} h={GREEN} v={BLUE} arc={RED} />
    <AxisMark x={1165} y={1324} h="y" v="z" descend={-2} />
  </>
);

/* Three-point projection: origin of the model plus a vanishing point per axis. */
const ORIGIN = [1618.6, 480];
const VX = { k: 0.001541, p: [1273, -1217] };
const VY = { k: -0.0001635, p: [21700, -1217] };
const VZ = { k: -0.002, p: [1500.5, 1501] };

function project(x: number, y: number, z = 0): [number, number] {
  const a = VX.k * x;
  const b = VY.k * y;
  const c = VZ.k * z;
  const w = 1 + a + b + c;
  const at = (i: number) => (ORIGIN[i] + a * VX.p[i] + b * VY.p[i] + c * VZ.p[i]) / w;
  return [at(0), at(1)];
}

function poly(pts: [number, number, number][], close = false) {
  return "M" + pts.map((p) => project(...p).map((n) => n.toFixed(1)).join(" ")).join("L") + (close ? "Z" : "");
}

function floorPath(step: number) {
  let d = "";
  for (let x = -140; x <= 200; x += step) d += poly([[x, -170, 0], [x, 250, 0]]);
  for (let y = -170; y <= 250; y += step) d += poly([[-140, y, 0], [200, y, 0]]);
  return d;
}

function ring(cx: number, cy: number, z: number) {
  const pts = Array.from({ length: 24 }, (_, i): [number, number, number] => {
    const a = (i * Math.PI) / 12;
    return [cx + 2.41 * Math.cos(a), cy + 2.41 * Math.sin(a), z];
  });
  return poly(pts, true);
}

const L = 31.8;
const W = 15.8;
const H = 9.6;
const solid =
  poly([[0, 0, 0], [L, 0, 0], [L, W, 0], [0, W, 0]], true) +
  poly([[0, 0, H], [L, 0, H], [L, W, H], [0, W, H]]) +
  poly([[0, 0, 0], [0, 0, H]]) + poly([[L, 0, 0], [L, 0, H]]) + poly([[L, W, 0], [L, W, H]]) + poly([[0, W, 0], [0, W, H]]);

const PerspectiveScene = () => (
  <>
    <g stroke="#4a525c" strokeWidth="1" fill="none">
      <path d={floorPath(1)} opacity=".05" />
      <path d={floorPath(10)} opacity=".26" />
    </g>
    <path d={poly([[0, W, 0], [0, 200, 0]])} stroke="#2f8f3a" strokeWidth="1.5" />
    <path d={poly([[L, 0, 0], [180, 0, 0]])} stroke="#a03a40" strokeWidth="1.5" />
    <path d={poly([[L, 0, 0], [L, W, 0], [L, W, H], [L, 0, H]], true)} fill="#b3aeb4" />
    <g fill="none" stroke={YELLOW} strokeWidth="3.5" strokeLinejoin="round">
      <path d={solid} />
      {studs.map(([x, y]) => {
        const wx = (x - 341.7) / 22.68;
        const wy = (586.3 - y) / 22.68;
        return <path key={`${x}-${y}`} strokeWidth="2.5" d={ring(wx, wy, 0) + ring(wx, wy, 1.1)} />;
      })}
    </g>
    <g fill="none" strokeWidth="1.5">
      <path stroke={RED} d="M1456 354L1459 382M1475 352L1478 381M1494 351L1497 379" />
      <path stroke={GREEN} d="M1457 353L1495 351M1458 368L1496 365M1460 382L1497 379" />
    </g>
    <g fill="none" strokeWidth="3">
      <path d="M1585 432L1649 510" stroke="#fff" strokeWidth="2" strokeDasharray="2 9" />
      <path stroke={GREEN} d="M1578 525C1583 560 1592 592 1600 593C1606 593 1608 580 1610 564" />
      <path stroke="#f02024" d="M1578 525C1640 517 1720 482 1743 419" />
      <path stroke="#2020e8" d="M1610 564C1695 556 1765 500 1743 419" />
      <circle cx="1649" cy="510" r="10" stroke="#fff" strokeWidth="1.5" />
      <path stroke={RED} d="M1582 417L1570 345" />
      <path fill={RED} stroke="none" d="M1564 320L1577 344L1560 347Z" />
      <path stroke={BLUE} d="M1586 419L1592 347" />
      <path fill={BLUE} stroke="none" d="M1594 320L1603 349L1581 348Z" />
      <path stroke={GREEN} d="M1564 434L1464 441" />
      <path fill={GREEN} stroke="none" d="M1427 444L1466 433L1467 451Z" />
      <path d="M1585 436L1592 466" stroke={RED} strokeDasharray="2 6" />
      <Handle x={1584} y={442} color={BLUE} />
      <Handle x={1610.5} y={430} color={GREEN} />
      <Handle x={1593} y={472} color={RED} />
      <Pivot x={1585} y={432} />
    </g>
    <path d="M1159 663L1165 708L1106 712M1165 708V670" fill="none" stroke="#5f646a" strokeWidth="1.5" />
    <g fontFamily={FONT} fontSize="26" fill="#595d62">
      <text x="1164" y="664">x</text>
      <text x="1171" y="671">z</text>
      <text x="1110" y="710">y</text>
    </g>
  </>
);

const Viewport = ({ name, view, active, tone, children }: { name: string; view: View; active?: boolean; tone: string; children: React.ReactNode }) => (
  <ViewportBox $tone={tone} aria-label={name}>
    <Canvas viewBox={`${view.x} ${view.y} ${view.w} ${view.h}`} preserveAspectRatio="xMinYMin slice">{children}</Canvas>
    <ViewLabel $active={active}>
      <ViewName>{name}</ViewName>
      <ViewMenu aria-label={`${name} view menu`}>
        <svg width="16" height="8"><path d="M0 0H16L8 8Z" fill="#fff" /></svg>
      </ViewMenu>
    </ViewLabel>
  </ViewportBox>
);

const tabs = ["Standard", "CPlanes", "Set View", "Display", "Select", "Viewport Layout", "Visibility", "Transform", "Curve Tools", "Surface Tools", "Solid Tools", "SubD Tools", "Mesh Tools"];
const snaps = ["End", "Near", "Point", "Mid", "Cen", "Int", "Perp", "Tan", "Quad", "Knot", "Vertex", "Project", "Disable"];

export default function App() {
  return (
    <Screen>
      <GlobalStyle />
      <Defs />
      <Shell>
        <Desktop>
          <DesktopStrip $tone="#4a72b4" />
          <DesktopStrip $tone="#8b8b88" />
          <DesktopStrip $tone="#4a72b4" />
        </Desktop>
        <TitleBack>
          <TitleBar>
            <Lights>
              <Light $color="#ff5f57" aria-label="Close"><LightDot /></Light>
              <Light $color="#febc2e" aria-label="Minimize" />
              <Light $color="#28c840" aria-label="Zoom" />
            </Lights>
            <TitleText>
              Untitled
              <TitleState><span>—</span><span>Edited</span></TitleState>
            </TitleText>
            <TitleRest />
          </TitleBar>
        </TitleBack>
        <Ribbon>
          <RibbonGrip><Grips vertical /></RibbonGrip>
          <RibbonMain>
            <TabStrip>
              {tabs.map((t, i) => <Tab key={t} $active={i === 0}>{t}</Tab>)}
            </TabStrip>
            <ToolRow>
              {toolbar.map((t) => <Tool key={t.name} item={t} h={54} />)}
            </ToolRow>
          </RibbonMain>
        </Ribbon>
        <Body>
          <Sidebar>
            <Panel>
              <PanelGrip><Grips /></PanelGrip>
              <CommandField placeholder="Command" aria-label="Command" />
              <Palette>
                {palette.map((t) => <Tool key={t.name} item={t} h={56} />)}
              </Palette>
            </Panel>
            <Panel $grow>
              <OsnapHeader>
                <OsnapTitle>Osnap</OsnapTitle>
                <button aria-label="Osnap settings">
                  <svg width="24" height="24" style={{ display: "block" }}>
                    <path d={gearPath(12, 12, 8, 12, 8)} fill="#bdbdbd" />
                    <circle cx="12" cy="12" r="4" fill={PANEL} />
                  </svg>
                </button>
              </OsnapHeader>
              <OsnapTabs>
                <OsnapTab $active aria-label="Object snaps">
                  <svg width="36" height="32" fill="none">
                    <circle cx="16" cy="16" r="13" stroke="#888" strokeWidth="2" />
                    <path d="M19 16H34" stroke="#000" strokeWidth="2" />
                    <rect x="13" y="13" width="6" height="6" fill="#fff" stroke="#000" strokeWidth="2" />
                  </svg>
                </OsnapTab>
                <OsnapTab aria-label="Selection filters">
                  <svg width="30" height="30" fill="none" stroke="#222" strokeWidth="2">
                    <path d="M24 3H29V7M1 23V27H6" />
                    <path d="M4 7C8 4 20 4 24 7L17 17V27H12V17Z" fill="url(#steel)" />
                  </svg>
                </OsnapTab>
              </OsnapTabs>
              <SnapList>
                {snaps.map((s) => (
                  <SnapItem key={s} $apart={s === "Disable"}>
                    <Check type="checkbox" />
                    {s}
                  </SnapItem>
                ))}
              </SnapList>
            </Panel>
          </Sidebar>
          <Center>
            <Viewports>
              <Viewport name="Top" view={topView} tone="#9da4ac"><TopScene /></Viewport>
              <Viewport name="Perspective" view={perspView} tone="#9ba1a8" active><PerspectiveScene /></Viewport>
              <Viewport name="Front" view={frontView} tone="#9fa5ad"><FrontScene /></Viewport>
              <Viewport name="Right" view={rightView} tone="#9fa5ad"><RightScene /></Viewport>
            </Viewports>
            <ViewTabs>
              <ViewTabIcon $tone="#1f74e8" aria-label="Viewports" />
              <ViewTabIcon $tone="#8a8a8a" aria-label="Layouts" />
              <ViewTab $active>Perspective</ViewTab>
              <ViewTab>Top</ViewTab>
              <ViewTab>Front</ViewTab>
              <ViewTab>Right</ViewTab>
              <ViewTab aria-label="Add layout">+</ViewTab>
            </ViewTabs>
          </Center>
          <RightDock>
            <DockTitle>H</DockTitle>
          </RightDock>
        </Body>
      </Shell>
    </Screen>
  );
}
